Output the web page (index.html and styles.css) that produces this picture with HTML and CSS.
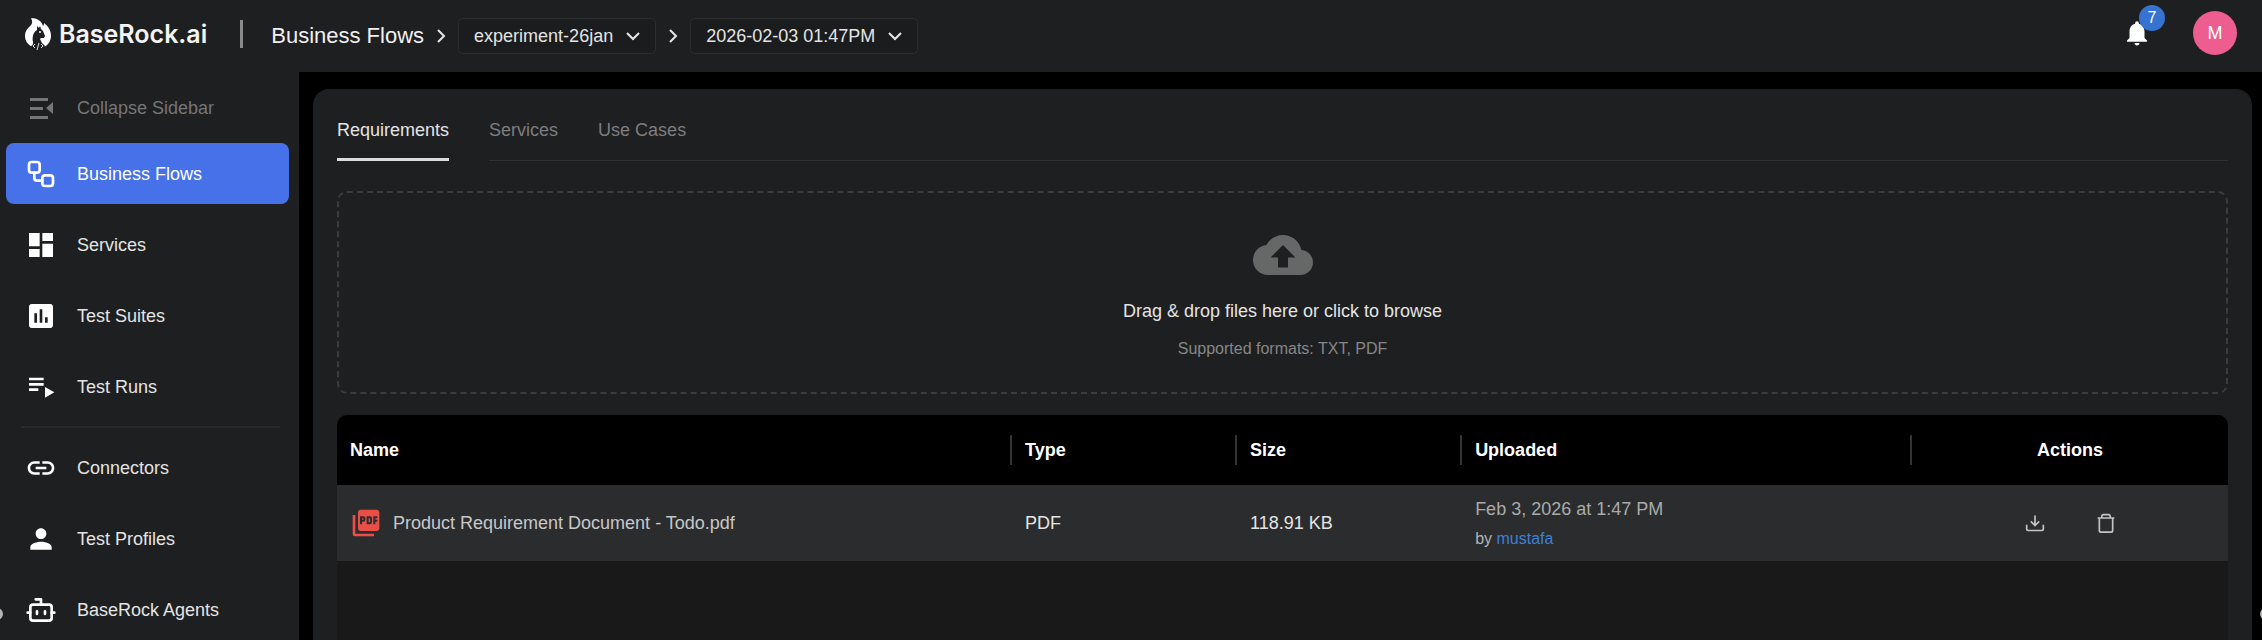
FILE: index.html
```
<!DOCTYPE html>
<html lang="en">
<head>
    <meta charset="utf-8">
    <title>BaseRock.ai - Business Flows</title>
    <meta name="viewport" content="width=device-width, initial-scale=1">
    <link rel="stylesheet" href="styles.css">
</head>
<body>
    <header class="topbar">
        <a class="brand" href="#">
            <svg class="brand-mark" viewBox="0 0 26 34" aria-hidden="true">
                <path fill="#fff" d="M6 1c6 0 11 3 12 8 1-1 1-2 1-3 4 3 7 7 7 13 0 5-3 9-7 11H8c-5-2-8-6-8-11 0-5 3-8 6-11 2-2 1-5 0-7z"/>
                <path fill="#1e1f21" d="M12 9l2 2 1-2 1 3 2 2 2 5-1 2h-3l-1 1 2 4 3 3-2 5H9l-3-5c2-1 2-2 2-4-1-4 0-10 4-12z"/>
                <circle cx="15" cy="15" r="1" fill="#fff"/>
                <path d="M10 27l-2 2 2 2M16 27l2 2-2 2M14 26l-2 7" fill="none" stroke="#ddd"/>
            </svg>
            <span class="brand-name">BaseRock.ai</span>
        </a>
        <span class="divider"></span>
        <nav class="crumbs" aria-label="Breadcrumb">
            <a class="crumb" href="#">Business Flows</a>
            <svg class="chevron" viewBox="0 0 12 16"><path d="M3 2l6 6-6 6"/></svg>
            <button class="picker" type="button">experiment-26jan
                <svg class="arrow" viewBox="0 0 14 10"><path d="M1 2l6 6 6-6"/></svg>
            </button>
            <svg class="chevron" viewBox="0 0 12 16"><path d="M3 2l6 6-6 6"/></svg>
            <button class="picker" type="button">2026-02-03 01:47PM
                <svg class="arrow" viewBox="0 0 14 10"><path d="M1 2l6 6 6-6"/></svg>
            </button>
        </nav>
        <div class="account">
            <button class="bell" type="button" aria-label="Notifications">
                <svg viewBox="0 0 24 24"><path d="M12 22c1.1 0 2-.9 2-2h-4c0 1.1.89 2 2 2zm6-6v-5c0-3.07-1.64-5.64-4.5-6.32V4c0-.83-.67-1.5-1.5-1.5s-1.5.67-1.5 1.5v.68C7.63 5.36 6 7.92 6 11v5l-2 2v1h16v-1l-2-2z"/></svg>
                <span class="badge">7</span>
            </button>
            <button class="avatar" type="button">M</button>
        </div>
    </header>

    <div class="layout">
        <aside class="sidebar">
            <button class="collapse" type="button">
                <svg class="icon" viewBox="0 0 32 32"><path d="M5 6h18v3H5zM5 15h13v3H5zM5 24h18v3H5zM21 16l7-6v12z"/></svg>
                Collapse Sidebar
            </button>
            <nav class="menu">
                <a class="item active" href="#">
                    <svg class="icon line" viewBox="0 0 24 24"><rect x="3" y="3" width="8" height="8" rx="2"/><path d="M7 11v4a2 2 0 0 0 2 2h4"/><rect x="13" y="13" width="8" height="8" rx="2"/></svg>
                    Business Flows
                </a>
                <a class="item" href="#">
                    <svg class="icon" viewBox="0 0 24 24"><path d="M3 13h8V3H3v10zm0 8h8v-6H3v6zm10 0h8V11h-8v10zm0-18v6h8V3h-8z"/></svg>
                    Services
                </a>
                <a class="item" href="#">
                    <svg class="icon" viewBox="0 0 24 24"><path d="M19 3H5c-1.1 0-2 .9-2 2v14c0 1.1.9 2 2 2h14c1.1 0 2-.9 2-2V5c0-1.1-.9-2-2-2zM9 17H7v-7h2v7zm4 0h-2V7h2v10zm4 0h-2v-4h2v4z"/></svg>
                    Test Suites
                </a>
                <a class="item" href="#">
                    <svg class="icon" viewBox="0 0 24 24"><path d="M3 9h11v2H3zM3 5h11v2H3zM3 13h7v2H3zM15 12v8l7-4z"/></svg>
                    Test Runs
                </a>
            </nav>
            <hr class="rule">
            <nav class="menu">
                <a class="item" href="#">
                    <svg class="icon" viewBox="0 0 24 24"><path d="M3.9 12c0-1.71 1.39-3.1 3.1-3.1h4V7H7c-2.76 0-5 2.24-5 5s2.24 5 5 5h4v-1.9H7c-1.71 0-3.1-1.39-3.1-3.1zM8 13h8v-2H8v2zm9-6h-4v1.9h4c1.71 0 3.1 1.39 3.1 3.1s-1.39 3.1-3.1 3.1h-4V17h4c2.76 0 5-2.24 5-5s-2.24-5-5-5z"/></svg>
                    Connectors
                </a>
                <a class="item" href="#">
                    <svg class="icon" viewBox="0 0 24 24"><path d="M12 12c2.21 0 4-1.79 4-4s-1.79-4-4-4-4 1.79-4 4 1.79 4 4 4zm0 2c-2.67 0-8 1.34-8 4v2h16v-2c0-2.66-5.33-4-8-4z"/></svg>
                    Test Profiles
                </a>
                <a class="item" href="#">
                    <svg class="icon line" viewBox="0 0 24 24"><path d="M12 8V4H8"/><rect x="4" y="8" width="16" height="12" rx="2"/><path d="M2 14h2M20 14h2M15 13v2M9 13v2"/></svg>
                    BaseRock Agents
                </a>
            </nav>
        </aside>

        <main class="panel">
            <div class="tabs" role="tablist">
                <button class="tab selected" type="button" role="tab" aria-selected="true">Requirements</button>
                <div class="tabs-rest">
                    <button class="tab" type="button" role="tab">Services</button>
                    <button class="tab" type="button" role="tab">Use Cases</button>
                </div>
            </div>

            <button class="dropzone" type="button">
                <svg class="cloud" viewBox="0 0 24 24"><path d="M19.35 10.04C18.67 6.59 15.64 4 12 4 9.11 4 6.6 5.64 5.35 8.04 2.34 8.36 0 10.91 0 14c0 3.31 2.69 6 6 6h13c2.76 0 5-2.24 5-5 0-2.64-2.05-4.78-4.65-4.96zM14 13v4h-4v-4H7l5-5 5 5h-3z"/></svg>
                <span class="drop-title">Drag &amp; drop files here or click to browse</span>
                <span class="drop-hint">Supported formats: TXT, PDF</span>
            </button>

            <div class="files">
                <table>
                    <colgroup>
                        <col class="col-name">
                        <col class="col-type">
                        <col class="col-size">
                        <col class="col-uploaded">
                        <col class="col-actions">
                    </colgroup>
                    <thead>
                        <tr>
                            <th><span>Name</span></th>
                            <th><span>Type</span></th>
                            <th><span>Size</span></th>
                            <th><span>Uploaded</span></th>
                            <th class="center"><span>Actions</span></th>
                        </tr>
                    </thead>
                    <tbody>
                        <tr>
                            <td>
                                <div class="file">
                                    <svg class="pdf" viewBox="0 0 24 24"><path d="M20 2H8c-1.1 0-2 .9-2 2v12c0 1.1.9 2 2 2h12c1.1 0 2-.9 2-2V4c0-1.1-.9-2-2-2zm-8.5 7.5c0 .83-.67 1.5-1.5 1.5H9v2H7.5V7H10c.83 0 1.5.67 1.5 1.5v1zm5 2c0 .83-.67 1.5-1.5 1.5h-2.5V7H15c.83 0 1.5.67 1.5 1.5v3zm4-3H19v1h1.5V11H19v2h-1.5V7h3v1.5zM9 9.5h1v-1H9v1zM4 6H2v14c0 1.1.9 2 2 2h14v-2H4V6zm10 5.5h1v-3h-1v3z"/></svg>
                                    Product Requirement Document - Todo.pdf
                                </div>
                            </td>
                            <td>PDF</td>
                            <td>118.91 KB</td>
                            <td>
                                <div class="date">Feb 3, 2026 at 1:47 PM</div>
                                <div class="author">by <a href="#">mustafa</a></div>
                            </td>
                            <td class="center">
                                <div class="actions">
                                    <button type="button" aria-label="Download">
                                        <svg viewBox="0 0 24 24"><path d="M12 3v12M7 10l5 5 5-5M2 14v5a2 2 0 0 0 2 2h16a2 2 0 0 0 2-2v-5"/></svg>
                                    </button>
                                    <button type="button" aria-label="Delete">
                                        <svg viewBox="0 0 24 24"><path d="M2 6h20M4 6v15a2 2 0 0 0 2 2h12a2 2 0 0 0 2-2V6M7 6V4a2 2 0 0 1 2-2h6a2 2 0 0 1 2 2v2"/></svg>
                                    </button>
                                </div>
                            </td>
                        </tr>
                    </tbody>
                </table>
            </div>
        </main>
    </div>
</body>
</html>
```
FILE: styles.css
```
* {
    box-sizing: border-box;
}

body {
    position: relative;
    display: flex;
    flex-direction: column;
    height: 100vh;
    margin: 0;
    overflow: hidden;
    background: #000;
    color: #e4e4e4;
    font-family: "Liberation Sans", Arial, sans-serif;
    font-size: 18px;
    line-height: 24px;
}

/* handles on the window edges */
body::before,
body::after {
    content: "";
    position: absolute;
    bottom: 20px;
    width: 12px;
    height: 12px;
    border-radius: 50%;
    background: #b5b5b5;
}

body::before {
    left: -9px;
}

body::after {
    right: -10px;
}

button {
    padding: 0;
    border: 0;
    background: none;
    color: inherit;
    font: inherit;
    cursor: pointer;
}

a {
    color: inherit;
    text-decoration: none;
}

svg {
    flex: none;
    fill: currentColor;
}

/* top bar */
.topbar {
    display: flex;
    flex: none;
    align-items: center;
    height: 72px;
    padding: 0 25px;
    background: #1e1f21;
}

.brand {
    display: flex;
    align-items: center;
    gap: 8px;
    padding-bottom: 4px;
}

.brand-mark {
    width: 26px;
    height: 34px;
}

.brand-name {
    color: #f4f4f4;
    font-family: Inter, sans-serif;
    font-size: 25px;
    font-weight: 600;
    line-height: 32px;
}

.divider {
    width: 3px;
    height: 28px;
    margin: 0 28px 4px 33px;
    background: #8a8a8a;
}

.crumbs {
    display: flex;
    align-items: center;
}

.crumb {
    color: #f0f0f0;
    font-size: 22px;
}

.chevron {
    width: 12px;
    height: 16px;
    margin: 0 11px;
}

.chevron path,
.arrow path {
    fill: none;
    stroke: #e8e8e8;
    stroke-width: 2;
}

.picker {
    display: flex;
    align-items: center;
    gap: 13px;
    height: 36px;
    padding: 0 15px;
    border: 1px solid #2b2d2f;
    border-radius: 5px;
    background: #1a1c1e;
}

.arrow {
    width: 14px;
    height: 10px;
}

.account {
    display: flex;
    align-items: center;
    gap: 41px;
    margin-left: auto;
    padding-bottom: 6px;
}

.bell {
    position: relative;
    display: flex;
    color: #fff;
}

.bell svg {
    width: 30px;
    height: 30px;
}

.badge {
    position: absolute;
    top: -13px;
    right: -13px;
    width: 26px;
    height: 26px;
    border-radius: 50%;
    background: #3672d0;
    font-size: 16px;
    line-height: 26px;
    text-align: center;
}

.avatar {
    width: 44px;
    height: 44px;
    border-radius: 50%;
    background: #ee5d8f;
    color: #fff;
}

/* sidebar */
.layout {
    display: flex;
    flex: 1;
    min-height: 0;
}

.sidebar {
    flex: none;
    width: 299px;
    padding: 5px 10px 0 6px;
    background: #1e1f21;
}

.collapse,
.item {
    display: flex;
    align-items: center;
    gap: 20px;
    width: 100%;
    height: 61px;
    padding-left: 19px;
    border-radius: 8px;
}

.collapse {
    margin-bottom: 5px;
    color: #757677;
}

.menu {
    display: flex;
    flex-direction: column;
    gap: 10px;
}

.active {
    background: #4671e8;
    color: #fff;
}

.icon {
    width: 32px;
    height: 32px;
}

.item .icon {
    color: #fff;
}

.line {
    fill: none;
    stroke: currentColor;
    stroke-width: 2;
    stroke-linecap: round;
    stroke-linejoin: round;
}

.rule {
    margin: 9px 9px 9px 15px;
    border: 0;
    border-top: 2px solid #292a2c;
}

/* content */
.panel {
    display: flex;
    flex: 1;
    flex-direction: column;
    min-width: 0;
    margin: 17px 10px 0 14px;
    padding: 24px 24px 0;
    border-radius: 16px 16px 0 0;
    background: #1e1f21;
}

.tabs {
    display: flex;
    gap: 40px;
    height: 48px;
}

.tabs-rest {
    display: flex;
    flex: 1;
    gap: 40px;
    border-bottom: 1px solid #303133;
}

.tab {
    padding-bottom: 14px;
    color: #7d7d7e;
}

.selected {
    padding-bottom: 12px;
    border-bottom: 3px solid #dcdcdc;
    color: #e4e4e4;
}

.dropzone {
    display: flex;
    flex-direction: column;
    align-items: center;
    margin-top: 30px;
    padding: 32px 0 31px;
    border: 2px dashed #3b3c3d;
    border-radius: 10px;
}

.cloud {
    width: 60px;
    height: 60px;
    color: #666867;
}

.drop-title {
    margin-top: 14px;
}

.drop-hint {
    margin-top: 14px;
    color: #868787;
    font-size: 16px;
}

.files {
    flex: 1;
    margin-top: 21px;
    overflow: hidden;
    border-radius: 10px 10px 0 0;
    background: #191919;
}

table {
    width: 100%;
    border-collapse: collapse;
    table-layout: fixed;
}

.col-name { width: 35.7%; }
.col-type { width: 11.9%; }
.col-size { width: 11.9%; }
.col-uploaded { width: 23.8%; }
.col-actions { width: 16.7%; }

th {
    height: 70px;
    padding: 0;
    background: #000;
    color: #fff;
    text-align: left;
}

th span {
    display: block;
    padding-left: 13px;
    border-right: 2px solid #343434;
    line-height: 30px;
}

.center {
    padding: 0;
    text-align: center;
}

.center span {
    padding: 0;
    border: 0;
}

td {
    height: 76px;
    padding: 0 0 0 13px;
    background: #2b2c2e;
}

.file {
    display: flex;
    align-items: center;
    gap: 11px;
    color: #c8c8c8;
}

.pdf {
    width: 32px;
    height: 32px;
    color: #ea4f47;
}

.date {
    padding-top: 2px;
    color: #aaa;
}

.author {
    margin-top: 6px;
    color: #b4b4b4;
    font-size: 16px;
}

.author a {
    color: #3d80d8;
}

.actions {
    display: flex;
    justify-content: center;
    gap: 51px;
}

.actions button {
    display: flex;
}

.actions svg {
    width: 20px;
    height: 20px;
    fill: none;
    stroke: #c4c4c4;
    stroke-width: 2;
}
```
